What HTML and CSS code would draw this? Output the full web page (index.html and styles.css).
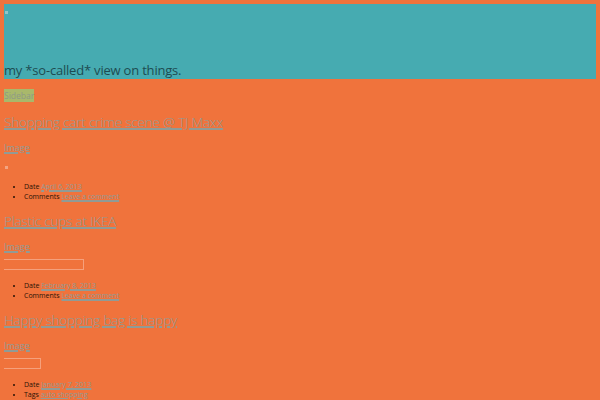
FILE: index.html
```html
<!DOCTYPE html>
<html>
<head>
<meta charset="utf-8">
<link rel="stylesheet" href="styles.css">
</head>
<body>
<header class="site-header">
  <span class="mark"></span>
  <p class="tagline">my *so-called* view on things.</p>
</header>
<div class="sidebar"><a href="#">Sidebar</a></div>

<article class="post">
  <h2 class="title"><a href="#">Shopping cart crime scene @ TJ Maxx</a></h2>
  <p class="format"><a href="#">Image</a></p>
  <div class="media"><span class="dot"></span></div>
  <ul class="meta">
    <li>Date <a href="#">April 6, 2013</a></li>
    <li>Comments <a href="#">Leave a comment</a></li>
  </ul>
</article>

<article class="post">
  <h2 class="title"><a href="#">Plastic cups at IKEA</a></h2>
  <p class="format"><a href="#">Image</a></p>
  <div class="media"><span class="box wide"></span></div>
  <ul class="meta">
    <li>Date <a href="#">February 8, 2013</a></li>
    <li>Comments <a href="#">Leave a comment</a></li>
  </ul>
</article>

<article class="post">
  <h2 class="title"><a href="#">Happy shopping bag is happy</a></h2>
  <p class="format"><a href="#">Image</a></p>
  <div class="media"><span class="box narrow"></span></div>
  <ul class="meta">
    <li>Date <a href="#">January 7, 2013</a></li>
    <li>Tags <a href="#">auto shopping</a></li>
  </ul>
</article>
</body>
</html>
```

FILE: styles.css
```css
html, body {
  background: #f0733c;
}
body {
  margin: 4px 4px 0 4px;
  font-family: "Open Sans", "Liberation Sans", sans-serif;
  color: #3a1a08;
}
a {
  color: #909b96;
  text-decoration: underline;
  text-decoration-thickness: 1.5px;
  text-underline-offset: 1px;
}
.site-header {
  background: #46abb1;
  height: 75px;
  display: flex;
  flex-direction: column;
  justify-content: space-between;
}
.mark {
  display: block;
  width: 3px;
  height: 3px;
  margin: 7px 0 0 1px;
  background: #8fc6c8;
}
.tagline {
  margin: 0;
  font-size: 13px;
  letter-spacing: -0.2px;
  line-height: 16px;
  color: #1e4b51;
  padding-bottom: 1px;
}
.sidebar {
  display: inline-block;
  margin-top: 10px;
  background: #a9b86b;
  font-size: 8.5px;
  line-height: 13px;
}
.sidebar a {
  color: #8d9a86;
  text-decoration: none;
}
.post {
  display: flow-root;
}
.title {
  margin: 10px 0 0 0;
  font-size: 13.5px;
  letter-spacing: -0.2px;
  line-height: 20px;
  font-weight: 300;
}
.post:first-of-type .title {
  margin-top: 8px;
}
.format {
  margin: 8px 0 0 0;
  font-size: 9px;
  line-height: 15px;
}
.media {
  height: 11px;
  margin-top: 5px;
  display: flex;
  align-items: flex-end;
}
.dot {
  display: block;
  width: 3px;
  height: 3px;
  margin-left: 1px;
  margin-bottom: 2px;
  background: #f3a482;
}
.box {
  display: block;
  height: 9px;
  margin-left: -1px;
  border: 1px solid #f5a07c;
}
.box.wide { width: 79px; }
.box.narrow { width: 36px; }
.meta {
  margin: 11px 0 0 0;
  padding-left: 20px;
  font-size: 7px;
  line-height: 9.5px;
  color: #2a1205;
}
```
